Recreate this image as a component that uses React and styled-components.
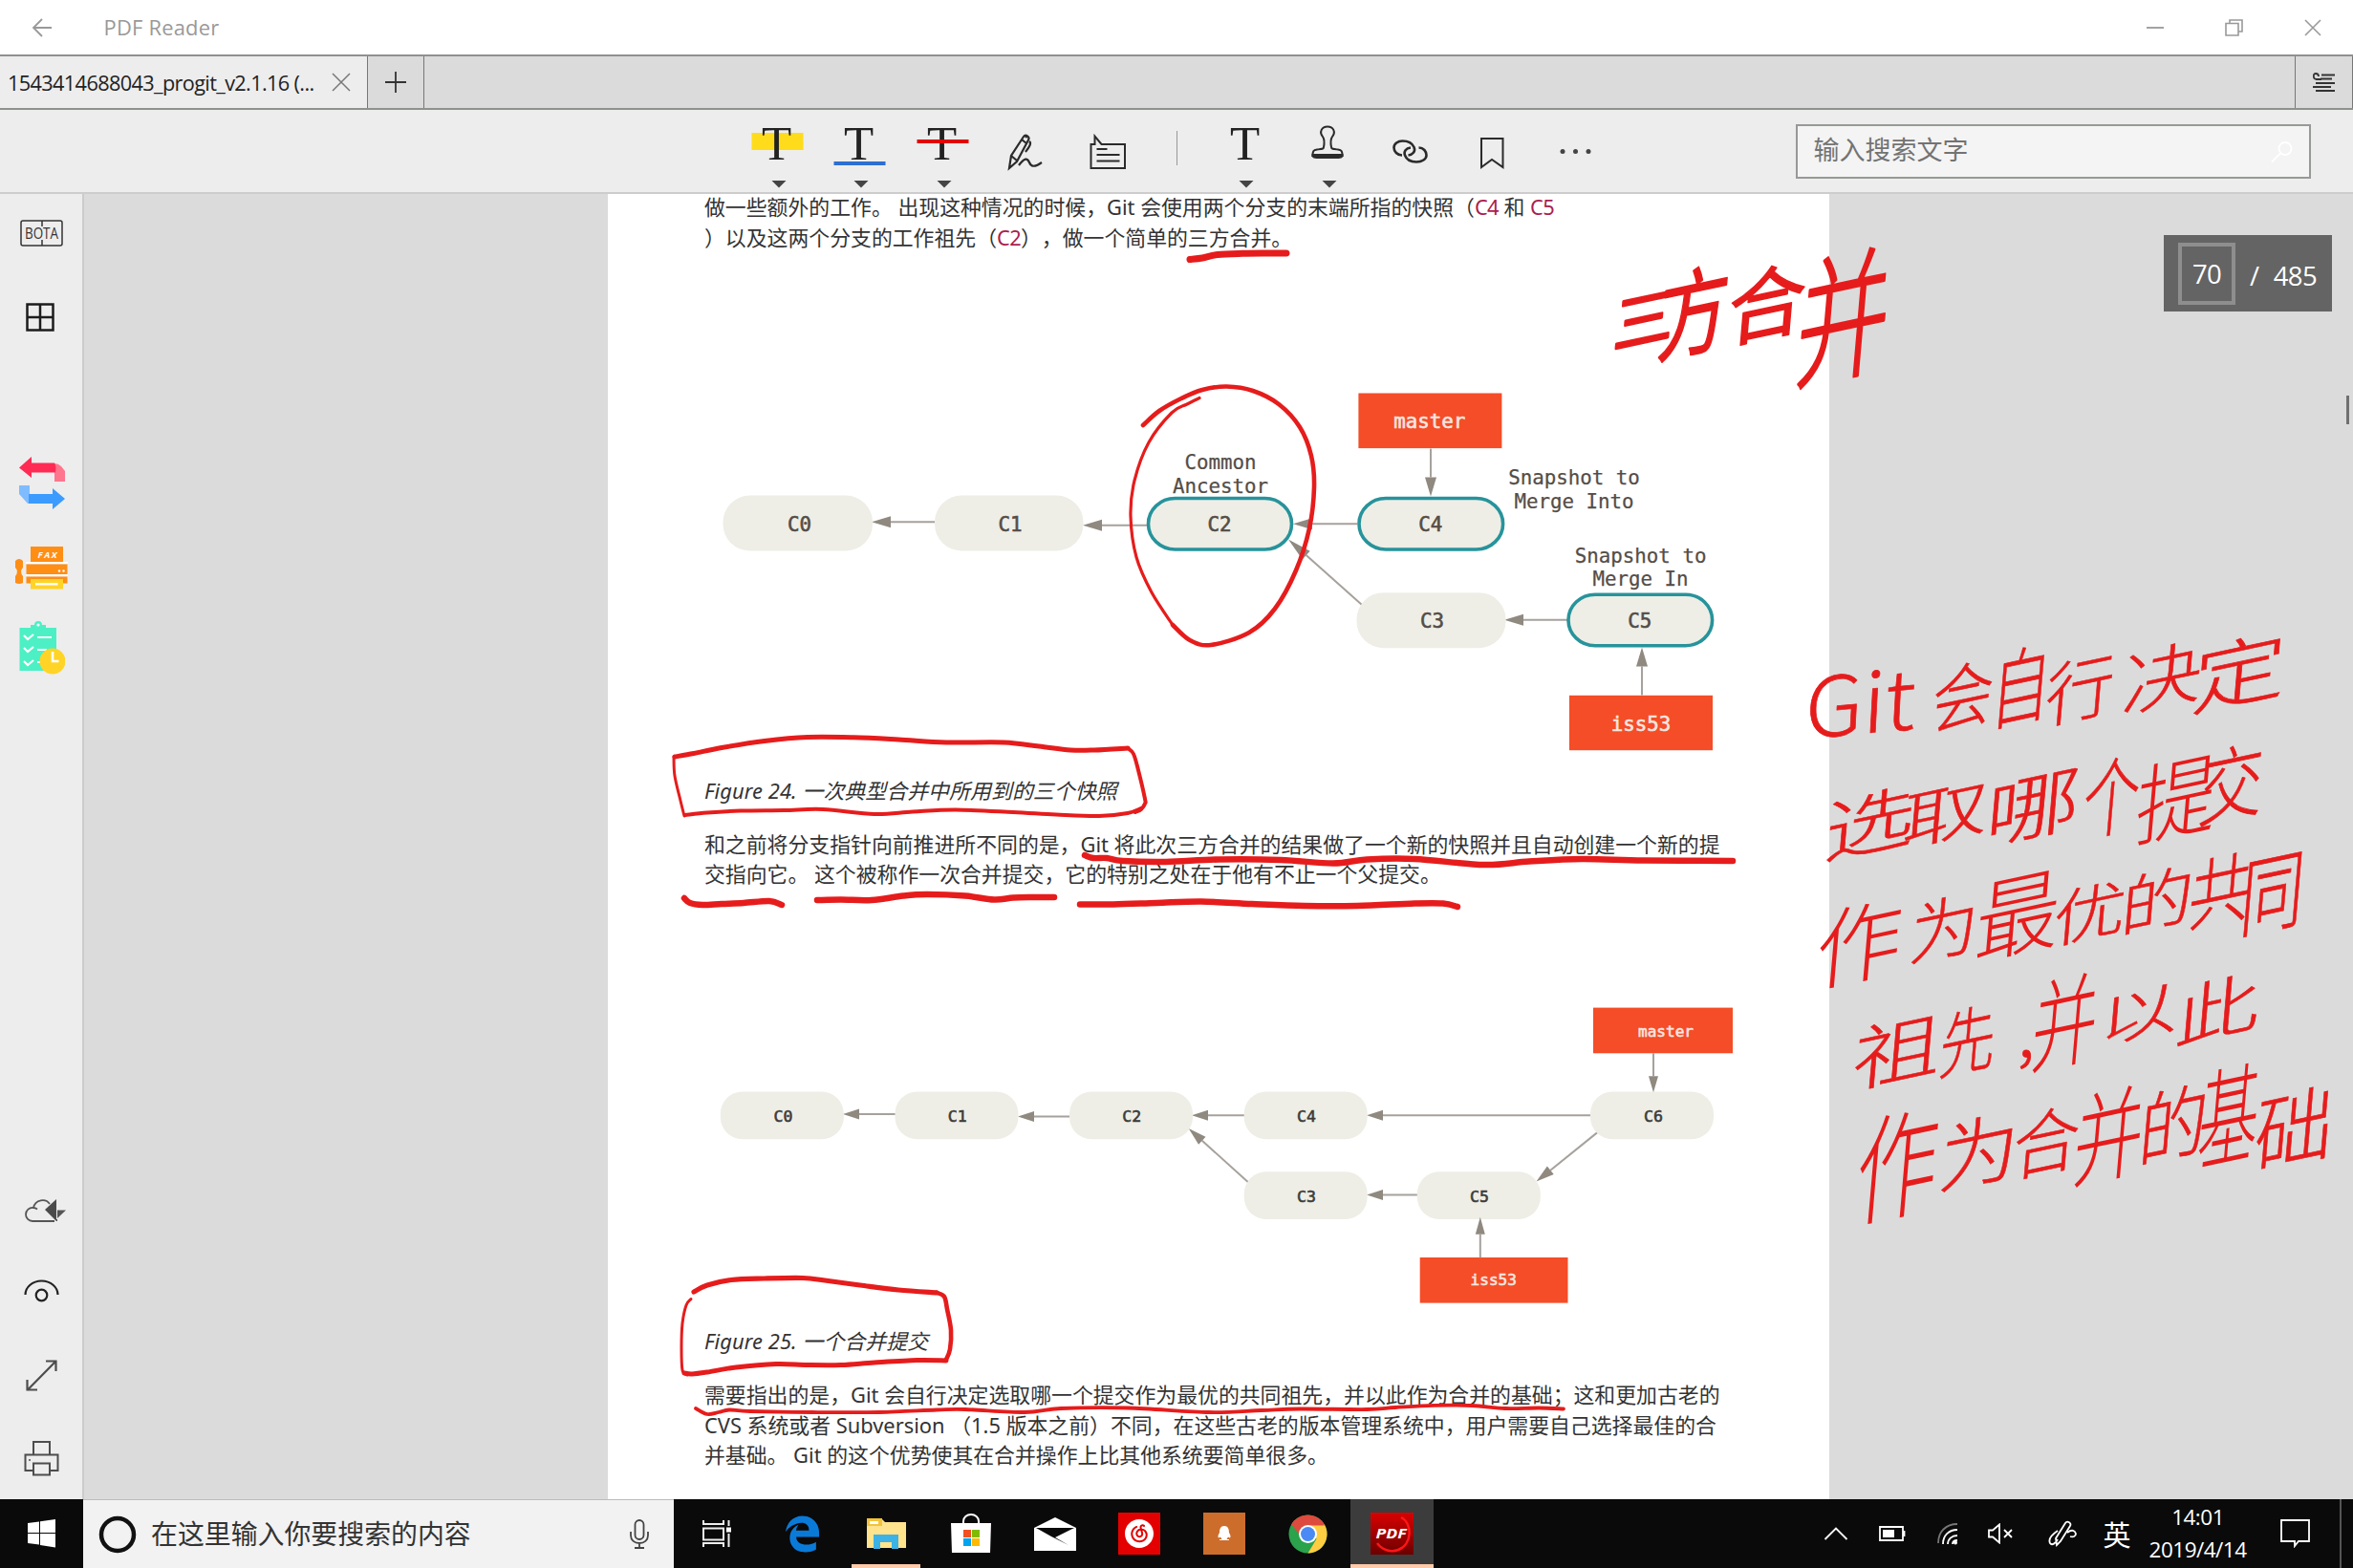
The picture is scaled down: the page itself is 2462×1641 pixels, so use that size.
import React from 'react';
import styled, { createGlobalStyle } from 'styled-components';
import { FaEdgeLegacy } from 'react-icons/fa6';
import { SiNeteasecloudmusic } from 'react-icons/si';

const ui = `"Open Sans", "Noto Sans", "Noto Sans CJK SC", sans-serif`;
const mono = `"DejaVu Sans Mono", monospace`;
const red = '#e61c1c';

const GlobalStyle = createGlobalStyle`
  * { box-sizing: border-box; }
  html, body { margin: 0; padding: 0; background: #dbdbdb; }
  body { overflow: hidden; font-family: ${ui}; }
  p, figure { margin: 0; }
  svg { display: block; }
`;

const Screen = styled.div`
  position: relative;
  display: flex;
  flex-direction: column;
  width: 2462px;
  height: 1641px;
  overflow: hidden;
`;

/* ---------- title bar ---------- */
const TitleBar = styled.header`
  display: flex;
  align-items: center;
  flex: none;
  height: 57px;
  padding: 0 1px 0 33px;
  background: #fff;
`;
const AppName = styled.div`
  flex: 1;
  margin-left: 53.5px;
  font-size: 21.9px;
  letter-spacing: 0.22px;
  line-height: 58px;
  color: #999;
`;
const WindowButton = styled.div`
  display: flex;
  justify-content: center;
  width: 82.5px;
  padding-top: 1px;
`;

/* ---------- tabs ---------- */
const TabStrip = styled.nav`
  display: flex;
  flex: none;
  height: 58px;
  border-top: 2px solid #8f918f;
  border-bottom: 2px solid #8f918f;
  background: #dbdbdb;
`;
const Tab = styled.div`
  display: flex;
  align-items: center;
  width: 385px;
  padding-left: 8px;
  background: #ededed;
  border-right: 1.5px solid #777;
`;
const TabName = styled.span`
  width: 339px;
  font-size: 21.7px;
  letter-spacing: -0.63px;
  white-space: nowrap;
  color: #222;
`;
const StripButton = styled.div`
  display: flex;
  align-items: center;
  justify-content: center;
  width: ${(p) => p.$w}px;
  border: solid #777;
  border-width: ${(p) => (p.$end ? '0 1px 0 1.5px' : '0 1.5px 0 0')};
  margin-left: ${(p) => (p.$end ? 'auto' : '0')};
`;

/* ---------- toolbar ---------- */
const Toolbar = styled.div`
  display: flex;
  flex: none;
  height: 88px;
  padding-left: 770px;
  background: #ededed;
  border-bottom: 2px solid #cdcdcd;
`;
const Tool = styled.div`
  flex: none;
  width: 86.4px;
  height: 86px;
`;
const Divider = styled.div`
  flex: none;
  width: 1.5px;
  height: 36px;
  margin: 22px 27px 0 29px;
  background: #999;
`;
const Search = styled.div`
  display: flex;
  align-items: center;
  justify-content: space-between;
  width: 539px;
  height: 57px;
  margin: 15px 0 0 188px;
  padding: 0 17px 0 16px;
  border: 2px solid #979997;
  background: #f4f4f4;
  font: 27px/45px "Noto Sans CJK SC", sans-serif;
  color: #737373;
  span { height: 52px; }
`;

/* ---------- work area ---------- */
const Work = styled.main`
  display: flex;
  flex: none;
  height: 1366px;
  background: #dbdbdb;
`;
const Sidebar = styled.aside`
  display: flex;
  flex-direction: column;
  width: 88px;
  padding-top: 27px;
  border-right: 2px solid #cbcbcb;
  background: #ededed;
`;
const SideItem = styled.div`
  flex: none;
  height: ${(p) => p.$h}px;
  margin-bottom: ${(p) => p.$gap}px;
  padding-left: ${(p) => p.$x}px;
`;
const Sheet = styled.article`
  display: flex;
  flex-direction: column;
  width: 1278px;
  margin-left: 548px;
  background: #fff;
`;
const Para = styled.p`
  margin-top: ${(p) => p.$top}px;
  padding-left: 101px;
  font: ${(p) => (p.$caption ? 'italic' : 'normal')} 21.87px/31.5px "Noto Sans", "Noto Sans CJK SC", sans-serif;
  letter-spacing: ${(p) => (p.$caption ? '0.08px' : '0')};
  text-spacing-trim: space-all;
  color: #333;
  white-space: pre;
`;
const Code = styled.span`
  color: #ab1e4e;
  letter-spacing: -0.7px;
`;
const PageBadge = styled.div`
  display: flex;
  align-items: center;
  width: 176px;
  height: 80px;
  margin: 43px 0 0 350px;
  padding-left: 15px;
  background: #646464;
  color: #fff;
  font-size: 27.5px;
  letter-spacing: -0.7px;
`;
const PageField = styled.div`
  width: 60px;
  height: 65px;
  border: 4px solid #8e8e8e;
  text-align: center;
  line-height: 57px;
`;
const PageTotal = styled.span`
  margin: 4px 0 0 15px;
  word-spacing: 9px;
`;
const ScrollThumb = styled.div`
  width: 3px;
  height: 30px;
  margin: 211px 0 0 15px;
  background: #707070;
`;
const Ink = styled.svg`
  position: absolute;
  left: 0;
  top: 0;
  pointer-events: none;
`;

/* ---------- task bar ---------- */
const TaskBar = styled.footer`
  display: flex;
  flex: none;
  height: 72px;
  background: #0a0a0a;
  color: #fff;
`;
const Start = styled.div`
  width: 87px;
  padding: 21px 0 0 29px;
`;
const TaskSearch = styled.div`
  display: flex;
  align-items: center;
  width: 618px;
  padding: 0 26px 0 16px;
  border-top: 1px solid #bbb;
  background: #f2f2f2;
  font: 27.9px/67px "Noto Sans CJK SC", sans-serif;
  color: #333;
  span { flex: 1; height: 70px; margin-left: 15px; }
`;
const Task = styled.div`
  display: flex;
  align-items: center;
  justify-content: center;
  width: ${(p) => p.$w || 88.3}px;
  background: ${(p) => (p.$active ? '#3c3c3c' : 'none')};
  box-shadow: ${(p) => (p.$active ? 'inset 0 -4px #ffcaa9' : 'none')};
`;
const OpenMark = styled.div`
  display: flex;
  align-items: center;
  justify-content: center;
  width: 72px;
  height: 72px;
  border-bottom: 4px solid #ffcaa9;
  padding-top: 4px;
`;
const Tray = styled.div`
  display: flex;
  margin-left: 389px;
`;
const TrayCell = styled.div`
  display: flex;
  align-items: center;
  justify-content: center;
  width: ${(p) => p.$w}px;
  font: 29px/70px "Noto Sans CJK SC", sans-serif;
`;
const Clock = styled.div`
  width: 137px;
  padding-top: 2px;
  text-align: center;
  font-size: 22.5px;
  line-height: 34px;
  letter-spacing: -0.5px;
`;
const PeekLine = styled.div`
  width: 1.5px;
  margin-left: 14px;
  background: #555;
`;

/* ---------- diagram parts ---------- */
const Label = styled.text`
  font-family: ${mono};
  font-size: ${(p) => p.$size || 20.8}px;
  fill: ${(p) => p.$fill || '#554d47'};
  stroke: ${(p) => p.$fill || '#554d47'};
  stroke-width: ${(p) => (p.$bold ? 0.6 : 0.25)};
  text-anchor: middle;
`;

function Arrow({ x1, y1, x2, y2, len = 20, half = 6 }) {
  const a = Math.atan2(y2 - y1, x2 - x1);
  const bx = x2 - len * Math.cos(a);
  const by = y2 - len * Math.sin(a);
  const dx = half * Math.sin(a);
  const dy = half * Math.cos(a);
  return (
    <g>
      <line x1={x1} y1={y1} x2={bx} y2={by} stroke="#a6a19c" strokeWidth="2" />
      <polygon points={`${x2},${y2} ${bx + dx},${by - dy} ${bx - dx},${by + dy}`} fill="#8f8980" />
    </g>
  );
}

function Commit({ x, y, w, h, name, tx, ty, ring, small }) {
  return (
    <g>
      <rect
        x={ring ? x + 2 : x} y={ring ? y + 2 : y}
        width={ring ? w - 4 : w} height={ring ? h - 4 : h}
        rx={small ? 23 : 28}
        fill="#eeeee6" stroke={ring ? '#27939b' : 'none'} strokeWidth="3.6"
      />
      <Label x={tx} y={ty} $bold $size={small ? 16.5 : 20.8} $fill={small ? '#3c3c3a' : '#554d47'}>{name}</Label>
    </g>
  );
}

function Branch({ x, y, w, h, name, tx, ty, small }) {
  return (
    <g>
      <rect x={x} y={y} width={w} height={h} fill="#f44d27" />
      <Label x={tx} y={ty} $bold $size={small ? 16 : 20.8} $fill="#f6e6e0">{name}</Label>
    </g>
  );
}

function ThreeSnapshots() {
  return (
    <svg width="1278" height="547.8" viewBox="636 264.500 1278 547.8">
      <Arrow x1={978} y1={546.7} x2={912} y2={546.7} />
      <Arrow x1={1200} y1={550.3} x2={1133} y2={550.3} />
      <Arrow x1={1420} y1={548.7} x2={1353} y2={548.7} />
      <Arrow x1={1425} y1={633.5} x2={1348} y2={565} len={25} />
      <Arrow x1={1640} y1={649.3} x2={1574} y2={649.3} />
      <Commit x={756.5} y={519} w={156.5} h={58} name="C0" tx={836.4} ty={556.5} />
      <Commit x={978} y={519} w={155.5} h={58} name="C1" tx={1057} ty={556.5} />
      <Commit x={1199.5} y={520} w={154} h={57.5} name="C2" tx={1276} ty={556.5} ring />
      <Commit x={1420} y={520} w={154.6} h={57.5} name="C4" tx={1496.8} ty={556.5} ring />
      <Commit x={1419.5} y={620.7} w={156} h={58} name="C3" tx={1498.6} ty={657.3} />
      <Commit x={1639} y={620.7} w={154.6} h={57.5} name="C5" tx={1715.7} ty={657.3} ring />
      <Branch x={1421.4} y={412} w={150} h={57.6} name="master" tx={1495.7} ty={448.5} />
      <Branch x={1642} y={728.3} w={150} h={57.4} name="iss53" tx={1717} ty={765.5} />
      <Arrow x1={1497} y1={470} x2={1497} y2={520} />
      <Arrow x1={1718} y1={728} x2={1718} y2={678} />
      <Label x="1277" y="492">Common</Label>
      <Label x="1277" y="516.4">Ancestor</Label>
      <Label x="1647" y="508">Snapshot to</Label>
      <Label x="1647" y="532.4">Merge Into</Label>
      <Label x="1716.6" y="589.600">Snapshot to</Label>
      <Label x="1716.6" y="614">Merge In</Label>
    </svg>
  );
}

function MergeCommit() {
  const node = { w: 129, h: 49.6, small: true };
  return (
    <svg width="1278" height="457.5" viewBox="636 931.700 1278 457.5">
      <Arrow x1={937} y1={1166.7} x2={882} y2={1166.7} len={17} half={5.5} />
      <Arrow x1={1120} y1={1169.3} x2={1065} y2={1169.3} len={17} half={5.5} />
      <Arrow x1={1302} y1={1168} x2={1247} y2={1168} len={17} half={5.5} />
      <Arrow x1={1665} y1={1168} x2={1430} y2={1168} len={17} half={5.5} />
      <Arrow x1={1306} y1={1238} x2={1243.7} y2={1181.7} len={19} half={5.5} />
      <Arrow x1={1672} y1={1185.3} x2={1607.5} y2={1237.3} len={19} half={5.5} />
      <Arrow x1={1484} y1={1251.3} x2={1430} y2={1251.3} len={17} half={5.5} />
      <Commit {...node} x={753.8} y={1143.3} name="C0" tx={819.4} ty={1175} />
      <Commit {...node} x={936.5} y={1143.3} name="C1" tx={1001.7} ty={1175} />
      <Commit {...node} x={1119} y={1143.3} name="C2" tx={1184.3} ty={1175} />
      <Commit {...node} x={1301.7} y={1143.3} name="C4" tx={1367} ty={1175} />
      <Commit {...node} x={1664} y={1143.3} name="C6" tx={1730} ty={1175} />
      <Commit {...node} x={1301.7} y={1227} name="C3" tx={1367} ty={1258.5} />
      <Commit {...node} x={1482.8} y={1227} name="C5" tx={1548} ty={1258.5} />
      <Branch x={1667} y={1055.3} w={146} h={47.7} name="master" tx={1743} ty={1085.3} small />
      <Branch x={1485.7} y={1316.7} w={154.8} h={47.6} name="iss53" tx={1562.7} ty={1346} small />
      <Arrow x1={1730} y1={1103} x2={1730} y2={1144} len={17} half={5} />
      <Arrow x1={1548.8} y1={1317} x2={1548.8} y2={1274.5} len={18} half={5} />
    </svg>
  );
}

/* ---------- pen annotations ---------- */
function smooth(points) {
  let d = `M${points[0][0]} ${points[0][1]}`;
  for (let i = 0; i < points.length - 1; i += 1) {
    const p0 = points[i - 1] || points[i];
    const p1 = points[i];
    const p2 = points[i + 1];
    const p3 = points[i + 2] || p2;
    d += `C${p1[0] + (p2[0] - p0[0]) / 6} ${p1[1] + (p2[1] - p0[1]) / 6} ${p2[0] - (p3[0] - p1[0]) / 6} ${p2[1] - (p3[1] - p1[1]) / 6} ${p2[0]} ${p2[1]}`;
  }
  return d;
}

const marks = [
  [7, [[1245, 271.5], [1258, 270], [1274, 266.5], [1300, 265.3], [1325, 265], [1346, 265]]],
  [4.6, [[1196, 445], [1213, 430], [1236, 417], [1258, 408], [1283.5, 404.5], [1311, 409], [1338, 423], [1360, 447], [1372, 477], [1375, 510], [1370, 553], [1356, 597], [1334, 637], [1307, 662], [1267, 675], [1245, 670], [1227, 654]]],
  [3.2, [[1227, 654], [1205, 620], [1189, 583], [1183, 540], [1187, 503], [1202, 463], [1226, 432], [1242, 423], [1255, 416.5]]],
  [5, [[706, 792], [726, 788.5], [755, 782.5], [800, 775.5], [845, 771.5], [893, 771.8], [940, 774], [990, 777], [1050, 777], [1087, 781], [1120, 785], [1145, 785], [1180, 783]]],
  [3, [[705, 792], [706, 812], [712, 838], [716, 854]]],
  [4, [[717, 853], [740, 850.5], [775, 848.5], [820, 848], [861, 847], [915, 852], [955, 849.5], [1000, 847.5], [1060, 850], [1105, 852.5], [1150, 854], [1180, 851], [1194, 846]]],
  [4, [[1180, 783], [1186, 789], [1191, 806], [1198, 836], [1198, 841], [1194, 847], [1188, 850]]],
  [6.5, [[1135, 895], [1144, 898], [1158, 898], [1175, 901], [1220, 902], [1275, 899.5], [1340, 900], [1395, 903.5], [1430, 899.5], [1480, 899], [1553, 905], [1600, 901.5], [1655, 899], [1720, 900.5], [1813, 901]]],
  [6.5, [[716, 940], [722, 945], [735, 947], [755, 946], [778, 945], [805, 943], [818, 947]]],
  [6.5, [[855, 942], [880, 941.5], [912, 942], [945, 937.5], [970, 936], [1010, 937.5], [1040, 941.5], [1060, 939.5], [1080, 939], [1103, 939]]],
  [6.5, [[1130, 946.5], [1165, 946.5], [1210, 945], [1257, 943.5], [1310, 946], [1365, 948], [1420, 948], [1480, 945.5], [1510, 945.5], [1525, 949]]],
  [5.2, [[726, 1352], [740, 1345], [765, 1339.5], [800, 1338], [840, 1337.5], [863, 1340], [900, 1345], [940, 1350], [980, 1352.8]]],
  [4.6, [[980, 1352.8], [988, 1357], [991, 1370], [995, 1392], [994, 1412], [990, 1423]]],
  [3, [[723, 1359.5], [718, 1366], [714, 1385], [713, 1410], [714, 1434], [719, 1439]]],
  [5, [[716, 1437], [724, 1438], [740, 1436], [770, 1431], [812, 1427.5], [845, 1428.5], [880, 1428.5], [915, 1426], [960, 1423.5], [990, 1424]]],
  [3.8, [[728, 1474], [740, 1480], [752, 1478], [763, 1475.5], [785, 1477], [850, 1478], [920, 1478], [980, 1475.5], [1010, 1475], [1072, 1478], [1110, 1474], [1180, 1473.5], [1265, 1478], [1320, 1476], [1360, 1474.5], [1430, 1475], [1460, 1473], [1500, 1470.8], [1540, 1471], [1575, 1474], [1610, 1473.5], [1636, 1474.5]]],
];

// character, left, right, top, bottom of each handwritten glyph
const headline = [
  ['三', 1690, 1750, 298, 370], ['方', 1737, 1808, 273, 380], ['合', 1810, 1888, 271, 364], ['并', 1883, 1976, 254, 408],
];
const note = [
  ['会', 2023, 2085, 687, 769], ['自', 2085, 2145, 671, 765], ['行', 2142, 2211, 681, 762], ['决', 2223, 2303, 667, 750], ['定', 2296, 2390, 658, 749],
  ['选', 1911, 2002, 819, 904], ['取', 1993, 2079, 812, 890], ['哪', 2080, 2175, 799, 888], ['个', 2181, 2238, 787, 881], ['提', 2237, 2318, 785, 886], ['交', 2303, 2367, 774, 866],
  ['作', 1902, 1989, 936, 1038], ['为', 2000, 2069, 931, 1011], ['最', 2069, 2154, 905, 1009], ['优', 2150, 2223, 918, 992], ['的', 2221, 2294, 903, 981], ['共', 2292, 2355, 888, 975], ['同', 2346, 2410, 885, 982],
  ['祖', 1941, 2029, 1057, 1143], ['先', 2031, 2087, 1048, 1130], ['并', 2128, 2194, 1014, 1124], ['以', 2198, 2278, 1025, 1096], ['此', 2278, 2363, 1015, 1097],
  ['作', 1944, 2027, 1154, 1285], ['为', 2031, 2111, 1160, 1250], ['合', 2108, 2175, 1153, 1237], ['并', 2172, 2242, 1132, 1244], ['的', 2240, 2309, 1131, 1222], ['基', 2302, 2363, 1109, 1226], ['础', 2361, 2440, 1132, 1229],
];
const Hand = styled.text`
  font-family: "Noto Sans CJK SC", sans-serif;
  font-weight: ${(p) => p.$weight};
  font-size: 100px;
  fill: ${red};
  stroke: ${red};
  stroke-width: ${(p) => p.$extra || 0};
  stroke-linejoin: round;
  text-anchor: middle;
`;
function HandGlyph({ glyph, weight, extra }) {
  const [ch, l, r, t, b] = glyph;
  const w = r - l;
  const h = b - t;
  const sx = w / 96;
  const sy = (h - w * 0.2) / 94;
  return (
    <Hand $weight={weight} $extra={extra} y="38" transform={`translate(${(l + r) / 2} ${(t + b) / 2}) skewY(-12) skewX(-5) scale(${sx} ${sy})`}>{ch}</Hand>
  );
}

function PenLayer() {
  return (
    <Ink width="2462" height="1641" viewBox="0 0 2462 1641" fill="none">
      <g stroke={red} strokeLinecap="round" strokeLinejoin="round">
        {marks.map(([w, pts], i) => <path key={i} d={smooth(pts)} strokeWidth={w} />)}
      </g>
      {headline.map((g) => <HandGlyph key={g[0]} glyph={g} weight={g[0] === '并' ? 300 : 400} extra={g[0] === '三' ? 4 : 1.8} />)}
      <Hand $weight={300} $extra={0.8} transform="translate(1945 768) rotate(-5) skewX(-8) scale(0.9 0.86)">Git</Hand>
      {note.map((g, i) => <HandGlyph key={i} glyph={g} weight={300} extra={g[4] - g[3] > 98 ? 0 : 0.8} />)}
      <Hand $weight={300} $extra={1.5} transform="translate(2137 1113) scale(0.6)">，</Hand>
    </Ink>
  );
}

/* ---------- toolbar icons ---------- */
const Serif = styled.text`
  font-family: "Liberation Serif", serif;
  font-size: 51px;
  fill: #222;
  text-anchor: middle;
`;
function ToolIcon({ children, menu }) {
  return (
    <Tool>
      <svg width="86" height="86" viewBox="0 0 86 86" fill="none" stroke="#2b2b2b" strokeWidth="2">
        {children}
        {menu && <path d="M37.5 74h15l-7.500 7.500z" fill="#444" stroke="none" />}
      </svg>
    </Tool>
  );
}

function Tools() {
  return (
    <>
      <ToolIcon menu>
        <rect x="16.500" y="24" width="54" height="18" fill="#ffdc1b" stroke="none" />
        <Serif x="42.500" y="51.500" stroke="none">T</Serif>
      </ToolIcon>
      <ToolIcon menu>
        <Serif x="42.500" y="51.500" stroke="none">T</Serif>
        <rect x="16.500" y="54" width="54" height="4" fill="#2d6fd2" stroke="none" />
      </ToolIcon>
      <ToolIcon menu>
        <Serif x="42.500" y="51.500" stroke="none">T</Serif>
        <rect x="16.500" y="31" width="54" height="4" fill="#e20303" stroke="none" />
      </ToolIcon>
      <ToolIcon>
        <path d="M27 61l2-13 13-20c2-3 7 0 5 3.500L35 54zM29 48l6 5M40 31l5 4M44 29l2-2M48 33c3 2-1 7-4 11M37 58c6-8 9-8 11-3s6 5 13 0" strokeWidth="2.200" />
      </ToolIcon>
      <ToolIcon>
        <path d="M26 61V36h4V27.500l7 8.500h24.500v25z" transform="translate(-.5 0)" />
        <path d="M31.500 41h11M31.500 47h24M31.500 53.500h24" strokeWidth="1.800" />
      </ToolIcon>
      <Divider />
      <ToolIcon menu>
        <Serif x="43.500" y="51.500" stroke="none">T</Serif>
      </ToolIcon>
      <ToolIcon menu>
        <path d="M39 39c1-5 1-8-1-11-4-5-1-10.500 5-10.500s9 5.500 5 10.500c-2 3-2 6-1 11 0 2 2 2 7 2.500 4 .5 4.500 2 4.500 6.500h-31c0-4.500.5-6 4.500-6.500 5-.5 7-.5 7-2.500z" />
        <path d="M27.500 47v1.500q1 1.500 4 1.500h23q3 0 4-1.500V47z" fill="#2b2b2b" />
      </ToolIcon>
      <ToolIcon>
        <path d="M35 47.500c-5 0-8.500-4-8.500-8s4-7 9-7 10 2 12 6.500-1.500 8-6 8.500" strokeWidth="2.600" />
        <path d="M44 39.500c-5 .5-7.500 4-6 8s6 7 12 7 10.500-3 10.500-7-3-8-8-8" strokeWidth="2.600" />
      </ToolIcon>
      <ToolIcon>
        <path d="M31 30h22.500v30L42 52l-11 8z" />
      </ToolIcon>
      <ToolIcon>
        <g fill="#444" stroke="none"><circle cx="30" cy="43.500" r="2.500" /><circle cx="43.500" cy="43.500" r="2.500" /><circle cx="57" cy="43.500" r="2.500" /></g>
      </ToolIcon>
    </>
  );
}

/* ---------- sidebar icons ---------- */
const Tiny = styled.text`
  font-family: ${ui};
  text-anchor: middle;
`;
function SideIcons() {
  return (
    <>
      <SideItem $h={28} $gap={59} $x={21}>
        <svg width="46" height="28" fill="none" stroke="#333" strokeWidth="1.500">
          <rect x="1" y="1" width="43" height="26" rx="2" /><path d="M23 1v6M23 21v6" />
          <Tiny x="22.500" y="19.500" fontSize="15.500" fill="#333" stroke="none" textLength="35" lengthAdjust="spacingAndGlyphs">BOTA</Tiny>
        </svg>
      </SideItem>
      <SideItem $h={31} $gap={130} $x={27}>
        <svg width="31" height="31" fill="none" stroke="#1c1c1c" strokeWidth="2.500"><path d="M1.500 1.500h27v27h-27zM15 1v28M1 15h28" /></svg>
      </SideItem>
      <SideItem $h={55} $gap={39} $x={20}>
        <svg width="48" height="55">
          <path d="M37 7q4 0 7 3l4 5v11H37z" fill="#ff758d" /><path d="M0 11.500L13 0v6.500h24q2 3 1 10H13V22z" fill="#ff2b54" />
          <path d="M0 30h11v19h-2L0 39z" fill="#7fbcff" /><path d="M48 44L35 33v6H10v10h25v6z" fill="#3c9bff" />
        </svg>
      </SideItem>
      <SideItem $h={45} $gap={33} $x={16}>
        <svg width="56" height="45">
          <rect x="16" width="34" height="16" fill="#ff8e15" />
          <Tiny x="33.500" y="12" fontSize="9.500" fontWeight="700" fontStyle="italic" fill="#fff" textLength="20">FAX</Tiny>
          <path d="M11 16h44v2H11zM11 29h44v2H11z" fill="#fff" />
          <path d="M11.500 18.500h43V29h-43zM11.500 31.500h43v7h-43zM0 15q4-4 8 0v7q-4 4 0 9v7q-4 2-8 0v-7q4-5 0-9z" fill="#ff8e15" />
          <rect x="16" y="34" width="34" height="10.500" fill="#ffd426" /><rect x="21" y="38" width="23.500" height="2.500" fill="#fff" />
          <circle cx="46" cy="25.500" r="1.200" fill="#fff" /><circle cx="50.500" cy="25.500" r="1.200" fill="#fff" />
        </svg>
      </SideItem>
      <SideItem $h={56} $gap={549} $x={20}>
        <svg width="48" height="56">
          <path d="M.5 7H12V4h4a4 4 0 018 0h4v3h11v45H.5z" fill="#4df0c4" /><circle cx="20" cy="4" r="1.600" fill="#fff" />
          <path d="M5 15l4 4 6-5M5 28l4 4 6-5M5 42l4 4 6-5M19 17h15M19 30h10M19 43h3" stroke="#fff" strokeWidth="2.200" fill="none" />
          <circle cx="35" cy="42" r="13.500" fill="#ffd426" /><path d="M35 32v10h6.500" stroke="#fff" strokeWidth="2.600" fill="none" />
        </svg>
      </SideItem>
      <SideItem $h={25} $gap={59} $x={26}>
        <svg width="44" height="25" fill="none" stroke="#555" strokeWidth="1.800">
          <path d="M31 23H8a7 7 0 01-7-7 7 7 0 018-7c2-9 13-10 17-4M9 9q2 0 4 1.500" />
          <path d="M33 0v23L21 11z" fill="#4b4b4b" stroke="none" /><path d="M34 11.500h9L34 20z" fill="#555" stroke="none" /><path d="M33 22h1" />
        </svg>
      </SideItem>
      <SideItem $h={24} $gap={60} $x={25}>
        <svg width="38" height="24" fill="none" stroke="#222" strokeWidth="2.200"><path d="M1.500 16a17 14.500 0 0134 0" /><circle cx="18.500" cy="16.500" r="5.800" /></svg>
      </SideItem>
      <SideItem $h={34} $gap={51} $x={27}>
        <svg width="34" height="34" fill="none" stroke="#4d4d4d" strokeWidth="2.200"><path d="M1.500 32L31.500 1.500M21 1.500h10.500V12M1.500 21v10.500H12" /></svg>
      </SideItem>
      <SideItem $h={37} $gap={0} $x={25}>
        <svg width="38" height="37" fill="none" stroke="#4d4d4d" strokeWidth="2"><path d="M10 14V1h17v13M10 31H1.500V14.500h34V31H27M10 23.500h17v12H10z" /><circle cx="6" cy="20" r="1" fill="#4d4d4d" stroke="none" /></svg>
      </SideItem>
    </>
  );
}

/* ---------- task bar icons ---------- */
function TaskIcons() {
  return (
    <>
      <Task $w={90}>
        <svg width="30" height="28" fill="none" stroke="#eee" strokeWidth="2"><path d="M1 0v4h21V0M1 8.500h21v12H1zM1 28v-4h21v4M27.500 0v6M27.500 14v14" /><rect x="25" y="7.500" width="5" height="5" fill="#fff" stroke="none" /></svg>
      </Task>
      <Task><FaEdgeLegacy size={39} color="#0a7ad9" /></Task>
      <Task>
        <OpenMark>
          <svg width="41" height="33"><path d="M0 3q0-3 3-3h12l4 4h22v27H0z" fill="#ffe38d" /><path d="M0 0h16v8H0z" fill="#f3c43b" /><path d="M3 3h9v3H3z" fill="#fff" /><path d="M0 8h41v23H0z" fill="#ffe38d" /><path d="M7 32V17h26v15h-7v-7H14v7z" fill="#3cb2e6" /></svg>
        </OpenMark>
      </Task>
      <Task>
        <svg width="44" height="42"><path d="M14 11V8a8 7 0 0116 0v3" fill="none" stroke="#fff" strokeWidth="2" /><path d="M1 10h42l-1 31H2z" fill="#fff" /><path d="M14 17h8v8h-8z" fill="#f25022" /><path d="M23 17h8v8h-8z" fill="#7fba00" /><path d="M14 26h8v8h-8z" fill="#00a4ef" /><path d="M23 26h8v8h-8z" fill="#ffb900" /></svg>
      </Task>
      <Task>
        <svg width="44" height="35"><path d="M0 11L22 0l22 11v24H0z" fill="#fff" /><path d="M2 11h40L22 21l14 8L18 20z" fill="#0a0a0a" /></svg>
      </Task>
      <Task>
        <svg width="44" height="44"><rect width="44" height="44" fill="#e40000" /><SiNeteasecloudmusic x="7" y="7" size={30} color="#fff" /></svg>
      </Task>
      <Task>
        <svg width="44" height="44"><rect width="44" height="44" fill="#cc6d2c" /><path d="M22 14c4 0 5 3.500 5 7 1.500 2.500 2 4.500 1 5.500l-2-1-1.500 2.500h2.500v1H17v-1h2.500L18 25.500l-2 1c-1-1-.5-3 1-5.500 0-3.500 1-7 5-7z" fill="#fff" /></svg>
      </Task>
      <Task>
        <svg width="41" height="41" viewBox="-20.500 -20.500 41 41">
          <circle r="20" fill="#2ba24c" /><path d="M0 0L-17.300-10A20 20 0 0117.300-10z" fill="#dd4b3e" /><path d="M0-10H17.300A20 20 0 010 20l9-15z" fill="#ffcd42" />
          <path d="M-17.300-10L-8.700 5 0 0z" fill="#2ba24c" /><path d="M-17.300-10L-9 0 0-9H17.300A20 20 0 00-17.300-10z" fill="#dd4b3e" />
          <circle r="9.500" fill="#fff" /><circle r="7.500" fill="#4a8af4" />
        </svg>
      </Task>
      <Task $active $w={87}>
        <svg width="45" height="44"><defs><linearGradient id="pdf" x2="0" y2="1"><stop stopColor="#d90000" /><stop offset="1" stopColor="#6b0000" /></linearGradient></defs><rect width="45" height="44" fill="url(#pdf)" /><path d="M32 5c12 6 12 28-3 34-8 3-17 0-22-7" fill="none" stroke="#ff1616" strokeWidth="2.500" /><Tiny x="21.500" y="27" fontSize="14.500" fontWeight="700" fontStyle="italic" fill="#fff" textLength="32" lengthAdjust="spacingAndGlyphs">PDF</Tiny></svg>
      </Task>
    </>
  );
}

function TrayIcons() {
  const line = { fill: 'none', stroke: '#fff', strokeWidth: 1.8 };
  return (
    <Tray>
      <TrayCell $w={64}><svg width="26" height="14" {...line}><path d="M1.500 13L13 1.500 24.500 13" /></svg></TrayCell>
      <TrayCell $w={54}><svg width="28" height="16" {...line}><path d="M1 1h24v14H1zM26.500 5v6" /><path d="M4 4h12v8H4z" fill="#fff" stroke="none" /></svg></TrayCell>
      <TrayCell $w={62}><svg width="24" height="24" {...line}><path d="M2 22C2 10 10 2 22 2" stroke="#777" /><path d="M7 23C7 14 13 8 22 8M12 23c0-5 4-9 10-9M17 23c0-3 2-4 5-4" /><circle cx="20" cy="21.500" r="2" fill="#fff" stroke="none" /></svg></TrayCell>
      <TrayCell $w={48}><svg width="27" height="22" {...line}><path d="M1 7.500h4l7-6v19l-7-6H1zM17 7l8 8M25 7l-8 8" /></svg></TrayCell>
      <TrayCell $w={82}><svg width="30" height="28" {...line}><path d="M9 26L8 19 18 3c2-3 7 0 5 3L13 22zM10 11c-6 4-10 9-8 13 2 3 6 0 8-4M20 13c5-4 8-2 9 1 0 3-3 4-6 3" /></svg></TrayCell>
      <TrayCell $w={32}>英</TrayCell>
      <Clock>14:01<br />2019/4/14</Clock>
      <TrayCell $w={66}><svg width="31" height="30" {...line}><path d="M1 1h29v22H19l-4 5v-5H1z" /></svg></TrayCell>
      <PeekLine />
    </Tray>
  );
}

export default function App() {
  return (
    <Screen>
      <GlobalStyle />
      <TitleBar>
        <svg width="22" height="20" fill="none" stroke="#999" strokeWidth="1.800"><path d="M11 1L2 10l9 9M1.500 10H21" /></svg>
        <AppName>PDF Reader</AppName>
        <WindowButton><svg width="18" height="18" stroke="#999" strokeWidth="1.800"><path d="M0 9h18" /></svg></WindowButton>
        <WindowButton><svg width="19" height="18" fill="none" stroke="#999" strokeWidth="1.600"><path d="M1 4.500h13V17H1zM5 4V1h13v12h-4" /></svg></WindowButton>
        <WindowButton><svg width="18" height="18" stroke="#999" strokeWidth="1.600"><path d="M1 1l16 16M17 1L1 17" /></svg></WindowButton>
      </TitleBar>
      <TabStrip>
        <Tab>
          <TabName>1543414688043_progit_v2.1.16 (...</TabName>
          <svg width="20" height="20" stroke="#777" strokeWidth="1.500"><path d="M1 1l18 18M19 1L1 19" /></svg>
        </Tab>
        <StripButton $w={59}>
          <svg width="22" height="22" stroke="#333" strokeWidth="1.800"><path d="M0 11h22M11 0v22" /></svg>
        </StripButton>
        <StripButton $end $w={61}>
          <svg width="23" height="20" fill="none" stroke="#333" strokeWidth="1.800"><path d="M9 2.500h14M8 6.500h12M3 11h20M0 15h19M3 19h20M3 7C0 6 0 1 3 1s3 3 3 3M3 7h6" /></svg>
        </StripButton>
      </TabStrip>
      <Toolbar>
        <Tools />
        <Search>
          <span>输入搜索文字</span>
          <svg width="23" height="22" fill="none" stroke="#fff" strokeWidth="1.800"><circle cx="15" cy="7.500" r="6.500" /><path d="M10.500 12L1 21.500" /></svg>
        </Search>
      </Toolbar>
      <Work>
        <Sidebar><SideIcons /></Sidebar>
        <Sheet>
          <Para $top={-2}>
            做一些额外的工作。 出现这种情况的时候，Git 会使用两个分支的末端所指的快照（<Code>C4</Code> 和 <Code>C5</Code>{'\n'}
            ）以及这两个分支的工作祖先（<Code>C2</Code>），做一个简单的三方合并。
          </Para>
          <ThreeSnapshots />
          <Para $caption $top={0}>Figure 24. 一次典型合并中所用到的三个快照</Para>
          <Para $top={24.5}>
            和之前将分支指针向前推进所不同的是，Git 将此次三方合并的结果做了一个新的快照并且自动创建一个新的提{'\n'}
            交指向它。 这个被称作一次合并提交，它的特别之处在于他有不止一个父提交。
          </Para>
          <MergeCommit />
          <Para $caption $top={0}>Figure 25. 一个合并提交</Para>
          <Para $top={24.7}>
            需要指出的是，Git 会自行决定选取哪一个提交作为最优的共同祖先，并以此作为合并的基础；这和更加古老的{'\n'}
            CVS 系统或者 Subversion （1.5 版本之前）不同，在这些古老的版本管理系统中，用户需要自己选择最佳的合{'\n'}
            并基础。 Git 的这个优势使其在合并操作上比其他系统要简单很多。
          </Para>
        </Sheet>
        <PageBadge>
          <PageField>70</PageField>
          <PageTotal>/ 485</PageTotal>
        </PageBadge>
        <ScrollThumb />
      </Work>
      <TaskBar>
        <Start>
          <svg width="29" height="30" fill="#fff"><path d="M0 4l12-1.500V14H0zM13 2.300L29 0v14H13zM0 15h12v11.500L0 25zM13 15h16v14.500L13 27z" /></svg>
        </Start>
        <TaskSearch>
          <svg width="40" height="40" fill="none"><circle cx="20" cy="20" r="17" stroke="#111" strokeWidth="4.500" /></svg>
          <span>在这里输入你要搜索的内容</span>
          <svg width="20" height="31" fill="none" stroke="#444" strokeWidth="1.800"><rect x="5.500" y="1" width="9" height="20" rx="4.500" /><path d="M1 13v4c0 5 4 8 9 8s9-3 9-8v-4M10 25v5M5 30h10" /></svg>
        </TaskSearch>
        <TaskIcons />
        <TrayIcons />
      </TaskBar>
      <PenLayer />
    </Screen>
  );
}
